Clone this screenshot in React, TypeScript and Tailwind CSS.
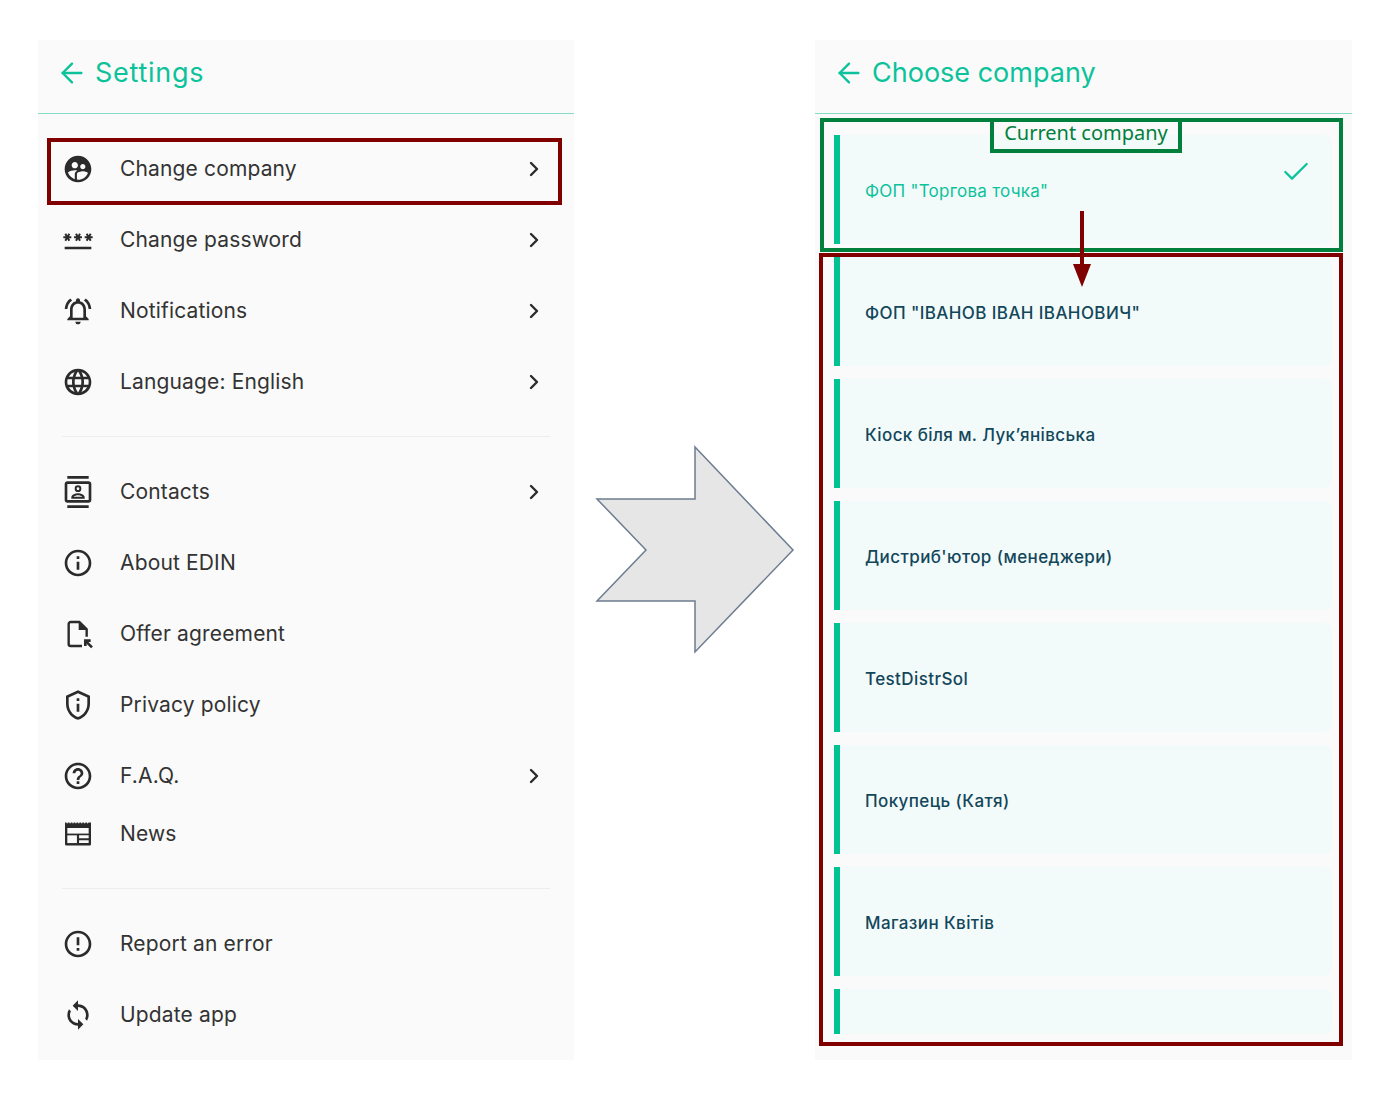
import { ArrowLeft, Check, ChevronRight } from 'lucide-react';
import {
  MdSupervisedUserCircle,
  MdPassword,
  MdOutlineNotificationsActive,
  MdOutlineLanguage,
  MdOutlineContacts,
  MdInfoOutline,
  MdOutlinePrivacyTip,
  MdHelpOutline,
  MdErrorOutline,
  MdSync,
} from 'react-icons/md';

function OfferIcon({ size = 32 }: { size?: number }) {
  return (
    <svg width={size} height={size} viewBox="0 0 24 24" fill="none" stroke="currentColor" strokeWidth="1.8">
      <path d="M18.5 14V8.5L13 3H6.5A1.5 1.5 0 0 0 5 4.5v15A1.5 1.5 0 0 0 6.5 21H15" />
      <path d="M12.5 3l6 6h-6z" fill="currentColor" stroke="none" />
      <path d="M18 17.5l4.5 4.5" strokeWidth="2" />
      <path d="M17.5 21v-4h4" strokeWidth="2" />
    </svg>
  );
}

function NewsIcon({ size = 32 }: { size?: number }) {
  return (
    <svg width={size} height={size} viewBox="0 0 24 24" fill="currentColor">
      <path d="M2.25 3.4h1l.6.9.6-.9h1l.6.9.6-.9h1l.6.9.6-.9h1l.6.9.6-.9h1l.6.9.6-.9h1l.6.9.6-.9h1l.6.9.6-.9h1l.6.9.6-.9H21.75V19.6a1 1 0 0 1-1 1H3.25a1 1 0 0 1-1-1z" />
      <path d="M4 7.5h16v4.2H4z" fill="#fafafa" />
      <path d="M4 13h7.2v5.8H4z" fill="#fafafa" />
      <path d="M12.8 13H20v2.1h-7.2zM12.8 16.7H20v2.1h-7.2z" fill="#fafafa" />
    </svg>
  );
}

function MenuRow({
  icon,
  label,
  chevron,
  height = 'h-[71px]',
}: {
  icon: React.ReactNode;
  label: string;
  chevron?: boolean;
  height?: string;
}) {
  return (
    <div className={`flex items-center pl-6 pr-[28px] ${height}`}>
      <div className="flex h-8 w-8 items-center justify-center text-[#2b2b2b]">{icon}</div>
      <span className="ml-[26px] flex-1 text-[21px] leading-7 tracking-[0.15px] text-[#333333]">{label}</span>
      {chevron && <ChevronRight size={24} strokeWidth={2.4} className="text-[#2b2b2b]" />}
    </div>
  );
}

function Header({ title, tracking }: { title: string; tracking: string }) {
  return (
    <div>
      <div className="flex h-[73px] items-center gap-[7px] pb-2 pl-[18px] text-[#0cc29a]">
        <ArrowLeft size={32} strokeWidth={1.8} />
        <span className={`text-[27px] leading-8 ${tracking}`}>{title}</span>
      </div>
      <div className="h-px bg-[#84dcc5]" />
    </div>
  );
}

function CompanyCard({
  name,
  current,
  className = 'h-[109px]',
}: {
  name?: string;
  current?: boolean;
  className?: string;
}) {
  return (
    <div className={`flex ${className}`}>
      <div className="w-[6px] bg-[#00c292]" />
      <div className="flex flex-1 justify-between rounded-r-lg bg-[#f3fafa]">
        {name && (
          <span
            className={`ml-[25px] self-center pt-[3px] text-[17px] leading-6 ${
              current ? 'tracking-[0.25px] text-[#0cc29a]' : 'font-medium tracking-[0.4px] text-[#12475a]'
            }`}
          >
            {name}
          </span>
        )}
        {current && <Check size={32} strokeWidth={1.7} className="mr-5 mt-[21px] text-[#0cc29a]" />}
      </div>
    </div>
  );
}

export default function App() {
  return (
    <div className="flex min-h-[1100px] bg-white pl-[38px] pt-10 font-['Inter',sans-serif]">
      {/* Settings */}
      <div className="relative h-[1020px] w-[536px] bg-[#fafafa]">
        <Header title="Settings" tracking="tracking-[0.75px]" />
        <div className="mt-[19px]">
          <MenuRow icon={<MdSupervisedUserCircle size={32} />} label="Change company" chevron />
          <MenuRow icon={<MdPassword size={32} />} label="Change password" chevron />
          <MenuRow icon={<MdOutlineNotificationsActive size={32} />} label="Notifications" chevron />
          <MenuRow icon={<MdOutlineLanguage size={32} />} label="Language: English" chevron />
        </div>
        <div className="mx-6 mt-[19px] h-px bg-[#eceeee]" />
        <div className="mt-[19px]">
          <MenuRow icon={<MdOutlineContacts size={32} />} label="Contacts" chevron />
          <MenuRow icon={<MdInfoOutline size={32} />} label="About EDIN" />
          <MenuRow icon={<OfferIcon />} label="Offer agreement" />
          <MenuRow icon={<MdOutlinePrivacyTip size={32} />} label="Privacy policy" />
          <MenuRow icon={<MdHelpOutline size={32} />} label="F.A.Q." chevron />
          <MenuRow icon={<NewsIcon />} label="News" height="h-[45px]" />
        </div>
        <div className="mx-6 mt-[32px] h-px bg-[#eceeee]" />
        <div className="mt-[19px]">
          <MenuRow icon={<MdErrorOutline size={32} />} label="Report an error" />
          <MenuRow icon={<MdSync size={32} />} label="Update app" />
        </div>
        {/* annotation */}
        <div className="absolute left-[9px] top-[98px] h-[67px] w-[515px] border-4 border-[#800000]" />
      </div>

      {/* Big arrow between the two screens */}
      <div className="flex h-[1020px] w-[241px] items-center justify-center">
        <svg width="200" height="210" viewBox="595 445 200 210">
          <path
            d="M695 447L793 550L695 652V601H597L646 550L597 499H695Z"
            fill="#e6e6e6"
            stroke="#6d7c90"
            strokeWidth="1.5"
          />
        </svg>
      </div>

      {/* Choose company */}
      <div className="relative h-[1020px] w-[537px] bg-[#fafafa]">
        <Header title="Choose company" tracking="tracking-normal" />
        <div className="mt-[21px] flex flex-col gap-[13px] pl-[19px] pr-5">
          <CompanyCard name={'ФОП "Торгова точка"'} current />
          <CompanyCard name={'ФОП "ІВАНОВ ІВАН ІВАНОВИЧ"'} />
          <CompanyCard name="Кіоск біля м. Лук’янівська" />
          <CompanyCard name="Дистриб'ютор (менеджери)" />
          <CompanyCard name="TestDistrSol" />
          <CompanyCard name="Покупець (Катя)" />
          <CompanyCard name="Магазин Квітів" />
          <CompanyCard className="h-[45px]" />
        </div>
        {/* annotations */}
        <div className="absolute left-[4px] top-[213px] h-[793px] w-[524px] border-4 border-[#800000]" />
        <div className="absolute left-[5px] top-[78px] h-[134px] w-[523px] border-4 border-[#00803c]" />
        <div className="absolute left-[175px] top-[78px] flex h-[35px] w-[192px] items-center justify-center border-4 border-[#00803c] pb-[5px] font-['Noto_Sans',sans-serif] text-[20px] leading-6 text-[#00803c]">
          Current company
        </div>
        <svg className="absolute left-[257px] top-[171px]" width="20" height="77" viewBox="0 0 20 77">
          <path d="M8 0h4v56h-4z" fill="#800000" />
          <path d="M1 53h18l-9 23z" fill="#800000" />
        </svg>
      </div>
    </div>
  );
}
